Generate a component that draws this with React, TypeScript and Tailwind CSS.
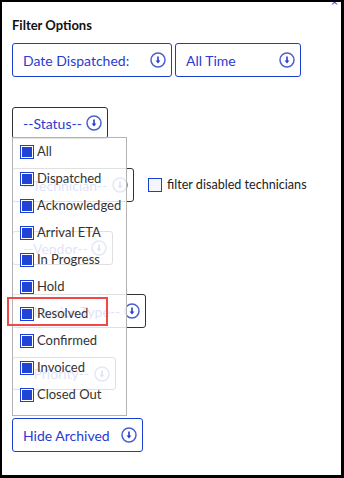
import React from 'react';

const STATUSES = [
  'All',
  'Dispatched',
  'Acknowledged',
  'Arrival ETA',
  'In Progress',
  'Hold',
  'Resolved',
  'Confirmed',
  'Invoiced',
  'Closed Out',
];

const DownIcon = () => (
  <svg width="16" height="16" viewBox="0 0 16 16" className="shrink-0">
    <circle cx="8" cy="8" r="7" fill="none" stroke="#4a5fd0" strokeWidth="1.5" />
    <line x1="8" y1="4.5" x2="8" y2="9.5" stroke="#2a3bd1" strokeWidth="1.6" />
    <polygon points="5.6,8.6 10.4,8.6 8,11.4" fill="#2a3bd1" />
  </svg>
);

interface SelectProps {
  label: string;
  width: string;
  height?: string;
  tone?: 'blue' | 'dark';
}

const SelectButton: React.FC<SelectProps> = ({ label, width, height = 'h-[34px]', tone = 'blue' }) => (
  <div
    className={`${width} ${height} flex items-center justify-between pl-[10px] pr-[5px] rounded-[3px] border bg-white ${
      tone === 'blue' ? 'border-[#1a3fd0]' : 'border-[#333333]'
    }`}
  >
    <span className="text-[14px] text-[#2a3bd1] whitespace-nowrap">{label}</span>
    <DownIcon />
  </div>
);

const Checkbox = ({ checked }: { checked: boolean }) => (
  <span
    className={`w-[14px] h-[14px] shrink-0 border border-[#1a3fd6] ${
      checked ? 'bg-[#2244d4] shadow-[inset_0_0_0_1px_#ffffff]' : 'bg-[#f4f6fb]'
    }`}
  />
);

export default function App() {
  return (
    <div
      className="relative w-[344px] h-[478px] bg-white border-2 border-r-[3px] border-b-[3px] border-black overflow-hidden"
      style={{ fontFamily: 'Lato, "Noto Sans", sans-serif' }}
    >
      {/* close glyph cut off at the top */}
      <span className="absolute right-[3px] -top-[6px] text-[12px] leading-none text-[#2a3bd1]">×</span>

      <div className="pl-[10px] pt-[14px] flex flex-col">
        <h2 className="text-[13px] font-bold text-[#111] leading-[18px] mb-[9px]">Filter Options</h2>

        {/* Row: date */}
        <div className="flex gap-[3px] mb-[30px]">
          <SelectButton label="Date Dispatched:" width="w-[160px]" />
          <SelectButton label="All Time" width="w-[126px]" />
        </div>

        {/* Row: status + dropdown */}
        <div className="relative mb-[29px] z-20">
          <SelectButton label="--Status--" width="w-[96px]" height="h-[32px]" tone="dark" />
          <div className="absolute left-0 top-[30px] w-[115px] border border-[#b4b4b4] bg-white/85 pb-[7px]">
            {STATUSES.map((s) => (
              <div key={s} className="h-[27px] flex items-center gap-[3px] pl-[7px]">
                <Checkbox checked />
                <span className="text-[13px] text-[#333] leading-none">{s}</span>
              </div>
            ))}
          </div>
          {/* highlight around Resolved */}
          <div className="absolute -left-[5px] top-[190px] w-[101px] h-[29px] border-2 border-[#f04848]" />
        </div>

        {/* Row: technician */}
        <div className="flex items-center mb-[29px]">
          <SelectButton label="--Technician--" width="w-[122px]" tone="dark" />
          <label className="flex items-center gap-[5px] ml-[14px]">
            <Checkbox checked={false} />
            <span className="text-[12.6px] text-[#222]">filter disabled technicians</span>
          </label>
        </div>

        <div className="mb-[29px]">
          <SelectButton label="--Vendor--" width="w-[101px]" tone="dark" />
        </div>
        <div className="mb-[29px]">
          <SelectButton label="--Invoice Type--" width="w-[134px]" tone="dark" />
        </div>
        <div className="mb-[28px]">
          <SelectButton label="--Priority--" width="w-[104px]" height="h-[33px]" tone="dark" />
        </div>
        <div>
          <SelectButton label="Hide Archived" width="w-[131px]" />
        </div>
      </div>
    </div>
  );
}
